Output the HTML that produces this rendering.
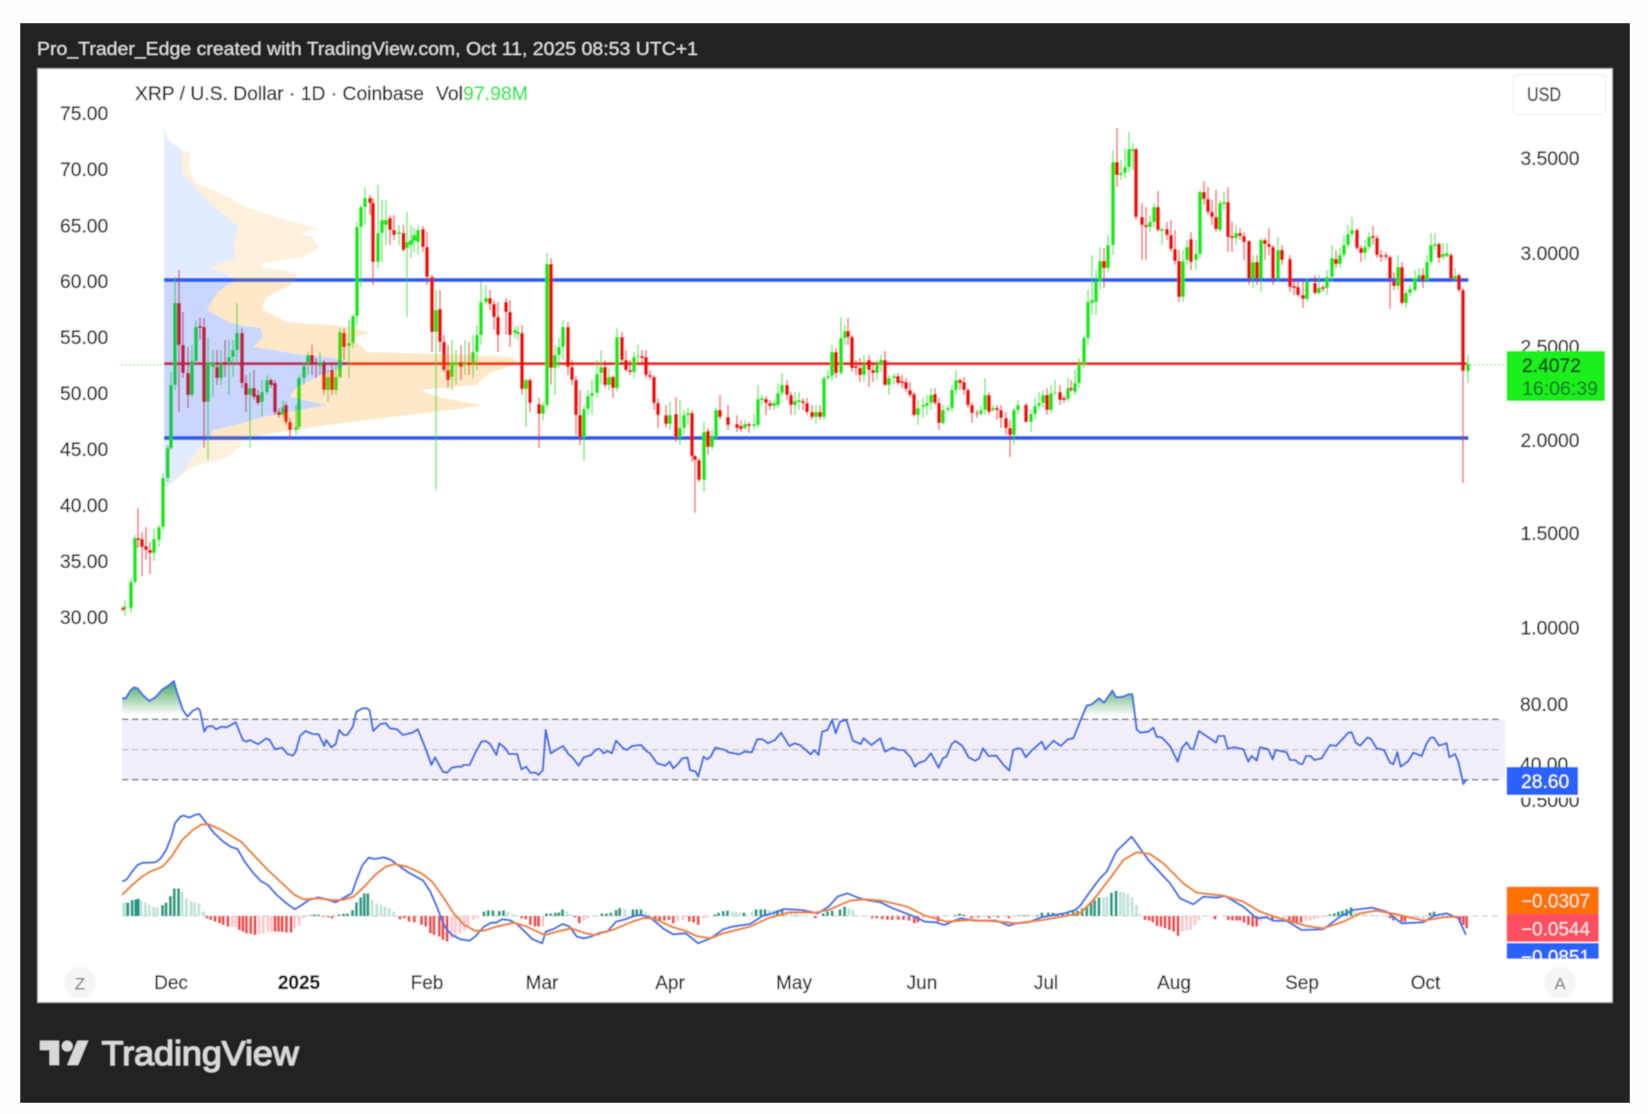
<!DOCTYPE html>
<html><head><meta charset="utf-8"><title>XRP / U.S. Dollar chart</title>
<style>
html,body{margin:0;padding:0;background:#fefefe}
svg{display:block}
text{font-family:"Liberation Sans",sans-serif}
.s{font-size:19.3px;fill:#1e1e1e;stroke:#1e1e1e;stroke-width:.22px}
.t{font-size:19px;fill:#1e1e1e;stroke:#1e1e1e;stroke-width:.22px;text-anchor:middle}
.n{vector-effect:non-scaling-stroke;fill:none}
</style></head><body>
<svg width="1648" height="1114" viewBox="0 0 1648 1114" xmlns="http://www.w3.org/2000/svg">
<defs>
<filter id="b" x="0" y="0" width="100%" height="100%"><feGaussianBlur stdDeviation="0.45"/></filter>
<clipPath id="va"><rect x="160" y="280" width="400" height="158"/></clipPath>
<clipPath id="c1"><rect x="1500" y="943" width="110" height="16"/></clipPath>
<linearGradient id="gg" x1="0" y1="0" x2="0" y2="1"><stop offset="0" stop-color="#2f9a45" stop-opacity=".9"/><stop offset="1" stop-color="#2f9a45" stop-opacity="0"/></linearGradient>
<polygon id="pe" points="168,140 182,150 191,153 189,163 191,173 195,183 214,190 230,198 246,207 266,214 286,220 305,225 318,229 300,233 312,237 320,247 312,252 304,257 264,263 260,267 280,270 296,273 296,280 287,287 275,292 267,297 263,304 263,310 275,316 287,322 310,324 333,325 352,328 370,333 352,338 360,345 367,352 440,354 510,357 520,363 505,368 490,373 483,378 477,385 420,390 430,394 443,398 465,402 483,405 460,409 433,412 400,416 367,420 335,424 307,428 275,433 243,438 240,447 227,457 210,462 193,467 178,478 167,487 182,473 190,463 200,447 210,438 213,430 240,424 263,417 295,411 327,405 308,401 290,397 293,392 297,387 307,382 317,377 335,370 350,363 340,360 333,358 318,356 303,355 278,351 253,347 258,342 263,337 262,332 260,328 245,326 230,323 218,316 207,310 212,301 217,293 226,286 236,280 224,273 211,267 224,262 237,258 235,252 234,247 235,240 236,233 239,227 226,216 214,207 204,197 195,187 188,180 182,173 182,160 182,150"/>
<polygon id="pb" points="164,126 168,140 182,150 182,173 188,180 195,187 204,197 214,207 226,216 239,227 236,233 235,240 234,247 235,252 237,258 224,262 211,267 224,273 236,280 226,286 217,293 212,301 207,310 218,316 230,323 245,326 260,328 262,332 263,337 258,342 253,347 278,351 303,355 318,356 333,358 340,360 350,363 335,370 317,377 307,382 297,387 293,392 290,397 308,401 327,405 295,411 263,417 240,424 213,430 210,438 200,447 190,463 182,473 167,487 164,487"/>
</defs>
<rect width="1648" height="1114" fill="#fefefe"/>
<g filter="url(#b)">
<rect x="20" y="23" width="1610" height="1080" fill="#232323"/>
<rect x="37.500" y="68.500" width="1575" height="934" fill="#fff" stroke="#9a9a9a" stroke-width="1"/>
<text x="37" y="55" font-size="18.500" fill="#e0e0e0" textLength="661" lengthAdjust="spacingAndGlyphs">Pro_Trader_Edge created with TradingView.com, Oct 11, 2025 08:53 UTC+1</text>
<text x="135" y="100" font-size="19" fill="#1a1a1a" stroke="#1a1a1a" stroke-width=".22" textLength="289" lengthAdjust="spacingAndGlyphs">XRP / U.S. Dollar · 1D · Coinbase</text>
<text x="436" y="100" font-size="19" fill="#1a1a1a" stroke="#1a1a1a" stroke-width=".22" textLength="27" lengthAdjust="spacingAndGlyphs">Vol</text>
<text x="463" y="100" font-size="19" fill="#1fe844" stroke="#1fe844" stroke-width=".22" textLength="65" lengthAdjust="spacingAndGlyphs">97.98M</text>

<g class="s">
<text x="60" y="120">75.00</text><text x="60" y="176">70.00</text><text x="60" y="232.500">65.00</text><text x="60" y="288">60.00</text><text x="60" y="344">55.00</text><text x="60" y="400">50.00</text><text x="60" y="456">45.00</text><text x="60" y="512">40.00</text><text x="60" y="568">35.00</text><text x="60" y="624">30.00</text>
<text x="1520.500" y="165">3.5000</text><text x="1520.500" y="260">3.0000</text><text x="1520.500" y="353.500">2.5000</text><text x="1520.500" y="447">2.0000</text><text x="1520.500" y="540">1.5000</text><text x="1520.500" y="634.500">1.0000</text>
<text x="1520" y="711">80.00</text><text x="1520" y="771">40.00</text><text x="1520.500" y="807">0.5000</text>
</g>
<rect x="1515" y="794" width="72" height="3.500" fill="#fff"/>

<rect x="1513" y="74.500" width="93" height="40" rx="5" fill="#fff" stroke="#f2f2f2" stroke-width="1.500"/>
<text x="1527" y="101" font-size="19" fill="#2a2a2a" stroke="#2a2a2a" stroke-width=".22" textLength="34" lengthAdjust="spacingAndGlyphs">USD</text>

<path d="M121 364.700H164M1470 364.700H1504" stroke="#22d94a" stroke-width="1" stroke-dasharray="1.500 2.500" fill="none"/>

<!-- horizontal levels -->
<path d="M164 280H1468.500M164 438H1468.500" stroke="#2c5ef0" stroke-width="4" fill="none"/>
<path d="M164 363.700H1467" stroke="#f01414" stroke-width="2.800" fill="none"/>

<!-- green wicks -->
<path stroke="#22e026" stroke-width="1.300" opacity=".75" fill="none" d="M125 600V616M131 578V613M135 535V584M154 529V561M159 525V547M163 473V530M167.700 445V482M171 372V450M175 277V390M192 345V397M196 320V364M208 338V460M213 350V397M221 350V385M229 340V395M233 340V377M237 303V365M250 373V448M262 380V416M267 375V395M283 400V418M296 405V435M299 375V430M304 362V385M308 352V375M320 352V375M328 370V402M336 365V395M340 328V378M349 320V378M353 314V348M357 222V325M361 205V287M365 187V225M378 185V268M382 200V262M386 200V245M399 225V245M407 212V317M411 225V258M414 228V252M418 225V255M436 290V490M452 340V390M456 350V385M465 340V375M473 335V378M477 325V370M481 282V345M486 285V305M515 326V338M518 326V340M526 378V427M543 402V420M547 253V408M555 345V395M559 338V368M563 320V360M584 405V461M588 390V415M592 380V415M597 360V398M601 350V385M609 368V390M617 328V392M634 352V378M638 345V362M670 402V430M680 400V445M684 410V435M688 408V425M704 422V492M712 430V450M716 408V440M745 420V430M754 414V430M758 385V428M762 395V405M774 400V410M778 383V408M782 373V396M795 392V415M799 392V410M816 405V424M824 376V420M828 370V380M832 345V380M841 317V375M845 325V345M864 355V382M877 360V380M881 355V372M889 375V395M894 373V385M918 400V425M923 398V418M927 395V415M931 388V410M943 405V425M948 405V412M952 385V412M956 370V395M981 406V416M985 378V415M993 405V412M1014 408V445M1018 400V415M1031 410V432M1035 398V420M1039 392V410M1043 390V408M1051 385V413M1055 380V396M1068 378V402M1075 370V395M1079 358V388M1084 335V368M1088 290V345M1092 255V315M1096 270V315M1100 247V290M1108 235V272M1113 150V255M1121 160V180M1125 148V178M1129 132V172M1133 143V170M1150 215V232M1154 203V228M1162 228V245M1183 250V302M1187 240V265M1196 240V270M1200 190V258M1220 200V232M1224 192V210M1236 225V245M1253 255V288M1261 238V292M1278 237V282M1307 278V302M1319 275V295M1327 270V295M1332 245V282M1340 248V268M1344 235V258M1348 225V248M1352 217V238M1365 240V260M1369 232V250M1398 255V290M1406 290V308M1410 285V296M1415 270V292M1419 268V280M1427 255V283M1431 233V265M1435 233V250M1443 243V260M1447 243V258M1455 268V281M1468 355V383"/>
<!-- green bodies -->
<path stroke="#14ea16" stroke-width="3.800" fill="none" d="M125 607V609M131 582V608M135 538V582M154 539V553M159 527V540M163 478V527M167.700 448V478M171 385V448M175 303V385M192 361V395M196 327V361M208 362V402M213 363V367M221 365V378M229 357V362M233 350V357M237 333V350M250 388V395M262 392V402M267 380V392M283 407V415M296 427V430M299 378V427M304 366V378M308 355V363M320 362V366M328 377V390M336 377V390M340 332V377M349 343V346M353 316V343M357 227V316M361 207V227M365 198V207M378 233V262M382 220V233M386 220V225M399 232V234M407 242V248M411 240V245M414 235V241M418 230V242M436 310V332M452 362V377M456 362V365M465 363V365M473 352V363M477 335V352M481 302V335M486 298V302M515 330V333M518 332V334M526 380V389M543 405V414M547 264V405M555 355V368M559 347V355M563 327V347M584 409V437M588 396V409M592 393V396M597 374V393M601 367V373M609 377V385M617 337V388M634 357V372M638 356V357M670 415V424M680 428V437M684 415V428M688 413V415M704 432V480M712 437V447M716 410V437M745 424V428M754 424V426M758 399V425M762 398V400M774 403V406M778 393V405M782 385V393M795 401V405M799 400V402M816 412V417M824 378V417M828 376V378M832 352V376M841 338V373M845 331V338M864 365V375M877 365V373M881 360V365M889 378V385M894 376V378M918 408V415M923 405V407M927 403V406M931 395V403M943 410V423M948 408V410M952 390V408M956 380V390M981 410V414M985 395V410M993 408V410M1014 410V435M1018 405V410M1031 414V422M1035 406V414M1039 403V406M1043 395V403M1051 393V410M1055 392V393M1068 388V399M1075 383V392M1079 364V383M1084 338V364M1088 302V338M1092 300V303M1096 282V302M1100 261V282M1108 245V268M1113 162V245M1121 173V175M1125 167V173M1129 149V167M1133 149V151M1150 222V227M1154 207V222M1162 229V231M1183 261V297M1187 247V260M1196 254V260M1200 192V254M1220 203V230M1224 202V204M1236 233V238M1253 262V278M1261 240V278M1278 250V278M1307 282V299M1319 288V293M1327 277V288M1332 258V277M1340 255V264M1344 245V255M1348 234V245M1352 230V234M1365 247V253M1369 237V247M1398 267V286M1406 293V303M1410 289V293M1415 278V290M1419 275V278M1427 262V280M1431 245V262M1435 244V246M1443 254V257M1447 253V256M1455 276V279M1468 364V371"/>
<!-- red wicks -->
<path stroke="#f01414" stroke-width="1.300" opacity=".75" fill="none" d="M123 606V611M138 508V548M142 532V576M146 527V560M150 542V574M179 270V412M183 312V378M188 347V408M200 318V340M204 318V448M217 350V385M225 340V377M242 328V388M246 375V412M254 370V400M258 390V405M271 378V388M275 380V415M279 408V418M286 402V425M290 418V440M312 345V375M316 358V378M324 360V395M332 365V395M344 328V360M370 195V215M373 198V285M390 215V245M394 215V240M403.500 225V252M423 226V252M427 232V285M432 275V352M440 290V352M444 335V372M448 345V388M461 345V380M469 342V375M490 290V310M494 300V330M498 302V352M506 298V335M510 300V347M522 325V395M530 378V412M539 398V448M551 258V385M568 322V375M572 360V385M576 376V435M580 390V445M605 360V388M613 375V398M622 332V365M626 350V372M630 360V375M642 350V365M646 350V378M650 370V380M654 375V410M658 398V428M666 405V428M676 397V442M692 410V462M695 455V513M699 458V482M708 428V455M720 395V420M728 405V430M737 415V432M741 420V432M749 422V433M766 396V415M770 400V410M787 380V400M791 392V415M803 398V410M807 398V415M812 405V420M820 405V420M836 348V378M848 318V345M852 335V372M856 360V375M860 358V382M869 355V387M873 362V382M885 351V386M898 373V385M902 375V388M906 378V392M910 382V398M914 392V417M935 388V405M939 398V430M960 378V390M964 377V395M968 388V408M972 402V423M977 410V418M989 392V415M997 405V420M1001 405V428M1006 412V435M1010 420V457M1026 403V423M1047 388V415M1060 385V405M1064 395V403M1071 380V392M1104 248V288M1117 128V187M1136 148V220M1142 203V260M1146 207V260M1158 191V232M1167 222V240M1171 220V252M1175 230V265M1179 250V302M1191 232V270M1204 181V205M1208 187V215M1212 200V225M1216 190V232M1228 187V252M1232 222V252M1240 228V240M1244 232V260M1249 240V285M1257 255V285M1265 238V260M1269 228V255M1273 245V285M1282 245V265M1290 255V292M1294 278V295M1298 280V297M1303 280V308M1315 275V295M1323 285V292M1336 250V268M1357 228V250M1361 245V262M1373 226V245M1377 235V258M1381 250V262M1386 252V260M1390 255V309M1394 272V290M1402 262V305M1423 268V288M1439 242V263M1451 253V280M1459 274V292M1463 288V483"/>
<!-- red bodies -->
<path stroke="#f20c0c" stroke-width="3.800" fill="none" d="M123 608V610M138 538V540M142 539V547M146 546V550M150 550V553M179 303V345M183 345V373M188 373V395M200 326V328M204 327V402M217 367V378M225 362V365M242 333V383M246 383V395M254 388V397M258 395V403M271 380V385M275 383V412M279 412V415M286 405V422M290 422V430M312 355V363M316 362V365M324 362V390M332 370V390M344 333V347M370 198V203M373 203V262M390 218V230M394 230V235M403.500 233V250M423 229V247M427 247V277M432 277V332M440 309V342M444 342V370M448 370V380M461 362V367M469 363V365M490 298V304M494 304V317M498 317V335M506 302V312M510 312V335M522 333V389M530 380V403M539 404V414M551 264V368M568 327V367M572 367V380M576 380V415M580 415V437M605 367V385M613 377V388M622 337V360M626 360V370M630 370V372M642 356V358M646 357V375M650 375V377M654 377V403M658 403V415M666 415V424M676 414V437M692 413V456M695 456V460M699 460V480M708 431V447M720 410V417M728 417V425M737 424V428M741 426V429M749 424V426M766 399V403M770 403V406M787 385V395M791 395V405M803 401V403M807 403V412M812 412V417M820 412V417M836 352V373M848 331V337M852 337V368M856 366V368M860 368V375M869 360V370M873 370V373M885 360V385M898 376V383M902 381V383M906 382V389M910 390V395M914 394V415M935 394V403M939 403V423M960 380V383M964 382V390M968 390V405M972 405V413M977 413V414M989 395V412M997 408V410M1001 410V418M1006 418V428M1010 428V435M1026 405V422M1047 395V410M1060 392V400M1064 398V400M1071 388V390M1104 261V268M1117 162V175M1136 149V217M1142 217V225M1146 225V227M1158 207V230M1167 229V235M1171 235V249M1175 249V261M1179 261V297M1191 239V262M1204 192V199M1208 199V212M1212 212V217M1216 217V229M1228 202V237M1232 236V238M1240 233V236M1244 236V242M1249 241V278M1257 262V278M1265 240V244M1269 244V247M1273 247V278M1282 250V260M1290 259V287M1294 286V288M1298 287V295M1303 295V299M1315 283V293M1323 287V289M1336 259V264M1357 230V248M1361 248V253M1373 236V238M1377 238V255M1381 255V257M1386 255V257M1390 257V278M1394 282V286M1402 267V303M1423 275V280M1439 244V258M1451 255V278M1459 275V290M1463 290V371"/>

<!-- volume profile overlay: translucent over candles and levels -->
<use href="#pe" fill="#ff9800" fill-opacity=".14"/>
<use href="#pb" fill="#2962ff" fill-opacity=".13"/>
<g clip-path="url(#va)"><use href="#pe" fill="#ff9800" fill-opacity=".09"/><use href="#pb" fill="#2962ff" fill-opacity=".14"/></g>

<!-- RSI -->
<rect x="122" y="719" width="1383" height="61" fill="#f1eef9"/>
<path d="M122 719.300H1500M122 779.700H1500" stroke="#6e6e6e" stroke-width="1.300" stroke-dasharray="6.500 3.500" fill="none"/>
<path d="M122 749.700H1500" stroke="#b0b0b0" stroke-width="1" stroke-dasharray="6.500 3.500" fill="none"/>
<g transform="translate(100 670) scale(.35714 .33333)">
<polygon fill="url(#gg)" points="62,135 62,85 72,85 85,62 95,52 105,55 120,75 138,93 155,82 175,58 190,48 207,33 215,65 232,120 236,135"/>
<polyline class="n" stroke="#3f6fe6" stroke-width="2.100" stroke-linejoin="round" points="62,85 72,85 85,62 95,52 105,55 120,75 138,93 155,82 175,58 190,48 207,33 215,65 232,120 245,140 260,122 275,115 280,122 292,185 300,170 315,168 325,178 340,170 355,172 380,157 400,210 410,215 420,210 443,223 465,205 475,210 490,238 510,233 525,252 540,257 548,245 560,198 575,183 595,192 612,193 628,228 633,210 648,232 660,222 670,180 682,195 692,195 708,170 718,125 735,115 748,115 755,122 765,183 785,162 800,160 812,175 832,178 848,195 875,188 890,178 915,245 928,285 938,262 960,305 972,308 985,293 1000,290 1012,290 1018,285 1035,285 1050,250 1068,215 1080,213 1092,222 1110,255 1118,220 1135,235 1145,252 1168,252 1180,298 1193,290 1205,308 1220,308 1228,315 1240,300 1248,180 1262,250 1280,238 1297,228 1310,250 1325,265 1340,287 1355,262 1375,255 1390,238 1400,236"/>
</g>
<g transform="translate(600 670) scale(.35714 .33333)">
<polyline class="n" stroke="#3f6fe6" stroke-width="2.100" stroke-linejoin="round" points="0,238 10,250 22,243 33,250 45,212 65,235 75,240 90,228 115,225 130,243 140,250 160,280 183,287 195,275 205,295 220,280 230,265 245,263 252,300 268,305 275,320 290,260 300,268 310,260 323,233 350,240 360,247 390,253 405,245 425,247 440,208 455,208 470,220 490,210 507,188 530,228 545,220 560,225 590,253 600,240 612,255 622,185 637,180 650,150 660,190 672,155 690,150 708,212 730,222 738,205 760,225 785,205 798,245 820,233 835,240 850,240 870,262 882,290 890,280 910,272 927,250 948,293 960,265 970,260 985,222 995,213 1015,228 1032,262 1050,272 1062,265 1072,235 1088,258 1110,257 1130,285 1146,302 1157,240 1170,235 1180,237 1192,262 1210,240 1237,215 1247,238 1270,212 1290,228 1310,208 1325,205 1335,180 1344,155"/>
</g>
<g transform="translate(1080 670) scale(.33333)">
<polygon fill="url(#gg)" opacity=".75" points="6,138 20,107 35,103 57,85 72,98 97,62 108,82 130,80 145,73 157,73 163,138"/>
<polyline class="n" stroke="#3f6fe6" stroke-width="2.100" stroke-linejoin="round" points="0,155 20,107 35,103 57,85 72,98 97,62 108,82 130,80 145,73 157,73 170,178 180,188 205,185 220,173 230,200 245,202 270,228 293,275 305,235 320,217 332,237 340,237 357,183 408,218 415,198 433,198 443,236 465,232 490,238 505,275 515,258 530,272 540,232 565,238 578,268 587,240 620,247 630,270 645,270 660,282 668,282 678,258 692,258 703,270 725,265 750,225 768,228 805,188 815,187 827,218 840,227 862,203 873,207 890,235 912,240 930,278 940,283 952,247 962,290 985,273 1000,248 1025,258 1040,220 1052,203 1062,203 1077,227 1100,220 1108,262 1125,252 1135,275 1150,342 1158,330 1163,330"/>
</g>

<!-- MACD -->
<path d="M122 916H1498" stroke="#c4c4c4" stroke-width="1" stroke-dasharray="6.500 3.500" fill="none"/>
<g transform="translate(100 670) scale(.35714 .33333)">
<path class="n" stroke="#bfe3da" stroke-width="2.800" d="M66 738V698M72 738V698M115 738V690M127 738V698M138 738V705M150 738V710M160 738V712M230 738V665M242 738V685M255 738V693M265 738V697M277 738V700M290 738V725M762 738V690M775 738V700M787 738V705M798 738V710M810 738V715M822 738V725M1142 738V725M1155 738V732M1167 738V735M1307 738V725M1318 738V732"/>
<path class="n" stroke="#1f9a80" stroke-width="2.800" d="M78 738V698M90 738V690M100 738V688M107 738V686M175 738V705M185 738V698M197 738V678M208 738V655M220 738V655M590 738V735M600 738V733M612 738V733M670 738V733M682 738V731M693 738V730M707 738V720M718 738V697M730 738V682M740 738V670M750 738V670M1075 738V725M1087 738V721M1100 738V721M1118 738V723M1130 738V721M1250 738V730M1262 738V730M1275 738V728M1285 738V727M1295 738V718"/>
<path class="n" stroke="#fbc8cf" stroke-width="2.800" d="M370 738V770M380 738V772M445 738V793M457 738V790M470 738V785M480 738V785M545 738V775M558 738V768M570 738V745M985 738V805M995 738V797M1008 738V790M1020 738V782M1030 738V770M1045 738V750M1058 738V745M1240 738V770M1355 738V752M1367 738V745"/>
<path class="n" stroke="#f04a4a" stroke-width="2.800" d="M300 738V745M310 738V750M322 738V755M335 738V760M345 738V765M358 738V770M390 738V780M400 738V785M410 738V790M422 738V792M434 738V795M490 738V785M500 738V785M510 738V786M522 738V788M535 738V788M625 738V741M640 738V742M650 738V745M840 738V748M852 738V745M865 738V755M880 738V757M900 738V765M912 738V770M925 738V790M935 738V795M950 738V800M960 738V810M972 738V815M1180 738V745M1192 738V748M1205 738V765M1218 738V770M1228 738V770M1330 738V742M1342 738V760"/>
<polyline class="n" stroke="#3f6fe6" stroke-width="2.100" stroke-linejoin="round" points="62,635 75,628 90,605 105,585 120,578 135,578 155,577 170,565 185,540 200,500 210,460 225,440 235,437 250,443 265,435 278,432 295,455 320,490 345,515 365,530 385,537 405,575 430,610 450,633 470,645 495,675 520,698 545,718 565,705 585,690 610,682 635,688 660,697 680,685 705,670 720,625 735,585 752,563 770,567 795,562 815,570 840,590 860,605 885,620 905,632 925,665 945,715 965,770 985,795 1010,808 1035,812 1050,800 1075,770 1095,758 1110,758 1125,748 1145,750 1165,760 1185,780 1210,807 1238,820 1248,785 1270,777 1295,762 1315,770 1335,800 1355,805 1375,800 1400,788"/>
<polyline class="n" stroke="#f08030" stroke-width="2.100" stroke-linejoin="round" points="62,675 85,650 115,622 140,605 175,590 200,560 230,510 260,480 285,463 305,463 340,480 395,515 430,555 470,600 510,640 545,675 570,688 610,685 650,690 680,690 710,680 740,650 770,615 800,590 825,582 860,590 900,610 930,635 960,680 990,730 1020,765 1050,782 1075,782 1110,770 1160,758 1195,770 1245,795 1290,782 1320,775 1360,790 1385,795 1400,792"/>
</g>
<g transform="translate(600 670) scale(.35714 .33333)">
<path class="n" stroke="#bfe3da" stroke-width="2.800" d="M70 738V718M127 738V725M138 738V733M370 738V725M380 738V725M392 738V727M425 738V725M475 738V720M487 738V720M522 738V725M535 738V727M548 738V730M560 738V733M572 738V735M697 738V715M708 738V720M720 738V735M732 738V736M1410 738V682M1420 738V680M1457 738V665M1467 738V668M1478 738V672M1490 738V682M1502 738V705M1512 738V732"/>
<path class="n" stroke="#1f9a80" stroke-width="2.800" d="M5 738V730M18 738V730M30 738V728M45 738V720M55 738V714M92 738V718M103 738V718M115 738V718M322 738V733M332 738V728M345 738V723M357 738V722M403 738V728M437 738V718M450 738V718M462 738V718M497 738V720M510 738V720M625 738V730M637 738V725M650 738V722M672 738V718M685 738V710M995 738V735M1007 738V730M1018 738V733M1175 738V735M1187 738V735M1200 738V735M1225 738V735M1237 738V728M1255 738V728M1268 738V728M1280 738V732M1295 738V730M1310 738V730M1325 738V725M1337 738V722M1350 738V715M1363 738V710M1375 738V695M1385 738V690M1397 738V682M1432 738V668M1445 738V662"/>
<path class="n" stroke="#fbc8cf" stroke-width="2.800" d="M218 738V755M232 738V750M290 738V745M302 738V742M905 738V745M920 738V742M935 738V742"/>
<path class="n" stroke="#f04a4a" stroke-width="2.800" d="M155 738V750M167 738V752M180 738V752M193 738V750M205 738V760M250 738V755M262 738V758M275 738V765M603 738V745M762 738V745M775 738V745M790 738V748M805 738V750M818 738V750M835 738V750M850 738V750M865 738V752M880 738V760M890 738V757M947 738V755M1040 738V745M1060 738V743M1090 738V745M1115 738V743M1145 738V745"/>
<polyline class="n" stroke="#3f6fe6" stroke-width="2.100" stroke-linejoin="round" points="0,788 20,785 45,755 70,748 95,738 115,735 140,742 160,760 180,778 205,793 240,790 275,820 310,805 345,778 370,770 420,762 455,738 490,728 515,717 565,720 610,730 640,710 665,680 692,670 720,682 745,690 785,697 820,715 880,740 910,755 940,757 965,765 985,755 1010,745 1050,752 1110,752 1145,767 1165,760 1200,757 1235,742 1300,730 1330,720 1344,708"/>
<polyline class="n" stroke="#f08030" stroke-width="2.100" stroke-linejoin="round" points="0,790 40,778 90,755 120,745 150,745 200,770 240,783 270,798 310,805 345,790 420,770 470,745 530,727 600,728 640,720 700,692 740,688 790,692 860,710 910,737 970,755 1040,750 1120,755 1165,760 1240,750 1320,735 1344,730"/>
</g>
<g transform="translate(1080 670) scale(.33333)">
<path class="n" stroke="#bfe3da" stroke-width="2.800" d="M825 738V725M838 738V728M850 738V730M875 738V732M890 738V735M905 738V737M1075 738V730M1090 738V730M1105 738V735M1120 738V737"/>
<path class="n" stroke="#1f9a80" stroke-width="2.800" d="M750 738V733M763 738V730M775 738V725M787 738V722M800 738V717M813 738V712M1050 738V728M1062 738V725"/>
<path class="n" stroke="#fbc8cf" stroke-width="2.800" d="M307 738V785M320 738V782M332 738V780M345 738V765M357 738V750M542 738V755M555 738V745M590 738V745M610 738V745M677 738V753M690 738V752M703 738V748M715 738V745M727 738V742M990 738V748M1000 738V745M1015 738V745M1030 738V748"/>
<path class="n" stroke="#f04a4a" stroke-width="2.800" d="M195 738V750M207 738V752M218 738V757M231 738V768M243 738V770M255 738V775M268 738V780M281 738V785M294 738V798M405 738V748M445 738V750M457 738V752M470 738V752M480 738V752M492 738V758M505 738V765M518 738V770M530 738V770M577 738V752M628 738V755M640 738V755M650 738V758M663 738V758M930 738V745M940 738V752M965 738V755M975 738V755M1140 738V758M1150 738V765M1160 738V775"/>
<polyline class="n" stroke="#3f6fe6" stroke-width="2.100" stroke-linejoin="round" points="0,708 30,665 60,625 80,605 110,543 155,500 180,535 205,570 270,640 300,685 340,703 370,680 410,683 435,678 490,710 530,745 560,742 580,752 620,753 665,780 730,778 780,740 820,720 875,713 920,725 965,760 1030,757 1060,738 1100,730 1135,745 1158,795"/>
<polyline class="n" stroke="#f08030" stroke-width="2.100" stroke-linejoin="round" points="0,730 40,690 90,625 130,570 170,547 210,552 250,580 310,640 350,668 430,677 490,695 540,725 590,742 680,768 730,775 790,755 840,730 890,722 950,733 1030,752 1090,742 1135,740"/>
</g>

<!-- price tags -->
<rect x="1506.700" y="351" width="98.300" height="50" rx="1" fill="#1cf01e"/>
<text x="1522" y="372" font-size="19.300" fill="#10481a" stroke="#10481a" stroke-width=".4">2.4072</text>
<text x="1522" y="395" font-size="19.300" fill="#1c7a2c" stroke="#1c7a2c" stroke-width=".2" textLength="76" lengthAdjust="spacingAndGlyphs">16:06:39</text>
<rect x="1506.700" y="767" width="71.300" height="28" rx="1" fill="#2962ff"/>
<text x="1521" y="788" font-size="19.300" fill="#fff">28.60</text>
<rect x="1506.700" y="886.700" width="92" height="27.500" rx="1" fill="#ff7000"/>
<text x="1521" y="907.500" font-size="19.300" fill="#ffe8d2" textLength="69" lengthAdjust="spacingAndGlyphs">−0.0307</text>
<rect x="1506.700" y="914" width="92" height="27.700" rx="1" fill="#ff5060"/>
<text x="1521" y="935.500" font-size="19.300" fill="#ffe8ea" textLength="69" lengthAdjust="spacingAndGlyphs">−0.0544</text>
<rect x="1506.700" y="943" width="92" height="15.700" rx="1" fill="#2962ff"/>
<g clip-path="url(#c1)"><text x="1521" y="963.500" font-size="19.300" fill="#fff" textLength="69" lengthAdjust="spacingAndGlyphs">−0.0851</text></g>

<!-- time axis -->
<circle cx="80" cy="983" r="16" fill="#f5f5f5"/>
<text x="80" y="989.500" font-size="17" fill="#6f6f6f" text-anchor="middle">Z</text>
<circle cx="1560" cy="983" r="16" fill="#f5f5f5"/>
<text x="1560" y="989.500" font-size="17" fill="#7a7a7a" text-anchor="middle">A</text>
<g class="t">
<text x="171" y="988.800">Dec</text>
<text x="299" y="988.800" font-weight="bold" fill="#111">2025</text>
<text x="427" y="988.800">Feb</text>
<text x="542" y="988.800">Mar</text>
<text x="670" y="988.800">Apr</text>
<text x="794" y="988.800">May</text>
<text x="922" y="988.800">Jun</text>
<text x="1046" y="988.800">Jul</text>
<text x="1174" y="988.800">Aug</text>
<text x="1302" y="988.800">Sep</text>
<text x="1425.500" y="988.800">Oct</text>
</g>

<!-- logo -->
<g transform="translate(40 1035.200) scale(1.36)" fill="#d9d9d9">
<path d="M14 22H7V11H0V4h14v18zM28 22h-8l7.500-18h8L28 22z"/><circle cx="20" cy="8" r="4"/>
</g>
<text x="101.700" y="1065" font-size="34" fill="#d9d9d9" stroke="#d9d9d9" stroke-width="1" textLength="197" lengthAdjust="spacingAndGlyphs">TradingView</text>
</g>
</svg>
</body></html>
